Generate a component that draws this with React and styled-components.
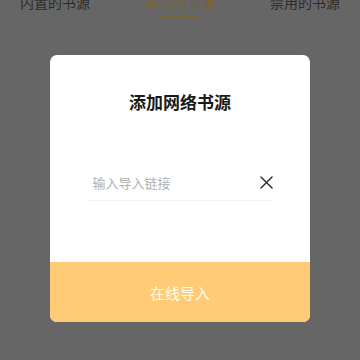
import React from 'react'
import styled, { createGlobalStyle } from 'styled-components'

const GlobalStyle = createGlobalStyle`
  html, body {
    margin: 0;
    padding: 0;
    background: #666666;
    font-family: "Noto Sans CJK SC", "Noto Sans", sans-serif;
  }
`

const Page = styled.div`
  width: 360px;
  height: 360px;
  overflow: hidden;
  background: #666666;
`

const TabBar = styled.div`
  display: flex;
  justify-content: space-between;
  padding: 0 20px;
  margin-top: -8px;
`

const Tab = styled.div`
  display: flex;
  flex-direction: column;
  align-items: center;
  font-size: 14px;
  line-height: 20px;
  color: ${p => (p.$active ? '#7a6335' : '#2c2c2c')};
`

const TabLine = styled.div`
  width: 40px;
  height: 3px;
  margin-top: 3px;
  background: ${p => (p.$active ? '#7a6335' : 'transparent')};
`

const Modal = styled.div`
  width: 260px;
  margin: 37px auto 0;
  background: #ffffff;
  border-radius: 7px;
  overflow: hidden;
  display: flex;
  flex-direction: column;
  align-items: center;
`

const Title = styled.div`
  margin-top: 35px;
  font-size: 17px;
  line-height: 24px;
  font-weight: 700;
  color: #1a1a1a;
`

const InputRow = styled.div`
  width: 185px;
  height: 36px;
  margin: 50px 0 61px;
  display: flex;
  align-items: center;
  border-bottom: 1px solid #f3f3f3;
`

const Input = styled.input`
  flex: 1;
  min-width: 0;
  border: none;
  outline: none;
  padding: 0 0 0 5px;
  font-family: inherit;
  font-size: 13px;
  color: #333;
  background: transparent;
  &::placeholder {
    color: #b0b0b0;
  }
`

const ClearButton = styled.button`
  width: 14px;
  height: 14px;
  padding: 0;
  border: none;
  background: none;
  display: flex;
  align-items: center;
  justify-content: center;
  margin-right: -1px;
`

const SubmitButton = styled.button`
  width: 100%;
  height: 60px;
  border: none;
  background: #ffcb77;
  color: rgba(255, 255, 255, 0.92);
  font-family: inherit;
  font-size: 15px;
`

function App() {
  const [link, setLink] = React.useState('')
  const tabs = ['内置的书源', '导入的书源', '禁用的书源']

  return (
    <Page>
      <GlobalStyle />
      <TabBar>
        {tabs.map((t, i) => (
          <Tab key={t} $active={i === 1}>
            {t}
            <TabLine $active={i === 1} />
          </Tab>
        ))}
      </TabBar>
      <Modal>
        <Title>添加网络书源</Title>
        <InputRow>
          <Input
            value={link}
            onChange={e => setLink(e.target.value)}
            placeholder='输入导入链接'
          />
          <ClearButton onClick={() => setLink('')}>
            <svg width='13' height='13' viewBox='0 0 13 13'>
              <path d='M1 1L12 12M12 1L1 12' stroke='#333' strokeWidth='1.5' strokeLinecap='round' />
            </svg>
          </ClearButton>
        </InputRow>
        <SubmitButton>在线导入</SubmitButton>
      </Modal>
    </Page>
  )
}

export default App
